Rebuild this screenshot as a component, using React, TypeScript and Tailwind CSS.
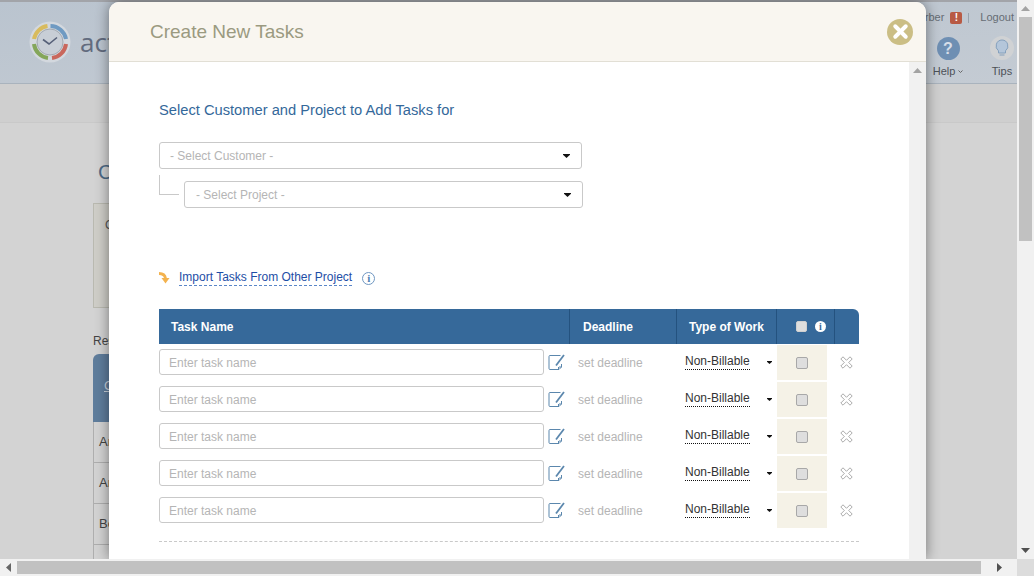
import { X } from "lucide-react";

const rows = [0, 1, 2, 3, 4];

function Caret({ className }: { className: string }) {
  return (
    <svg className={className} width="7" height="4" viewBox="0 0 7 4">
      <path d="M0 0h7v.8L3.500 4 0 .8z" fill="#111" />
    </svg>
  );
}

function EditIcon() {
  return (
    <svg width="18" height="18" viewBox="0 0 18 18" fill="none" className="shrink-0">
      <path d="M12.500 2.500H2a1 1 0 0 0-1 1v12a1 1 0 0 0 1 1h9l2.500-2.500V11" stroke="#5b87ad" strokeWidth="1" />
      <path d="M10.500 14v2.500M11 14h2.500" stroke="#5b87ad" strokeWidth="1" />
      <path d="M8 12.500 16 2" stroke="#5b87ad" strokeWidth="1.800" />
    </svg>
  );
}

function CrossIcon() {
  return (
    <svg width="13" height="13" viewBox="0 0 13 13" fill="none">
      <path
        d="M3 .8 6.500 4.300 10 .8 12.200 3 8.700 6.500 12.200 10 10 12.200 6.500 8.700 3 12.200.8 10 4.300 6.500.8 3z"
        stroke="#a0a0a0"
        strokeWidth="0.9"
      />
    </svg>
  );
}

function Checkbox({ className = "" }: { className?: string }) {
  return <span className={`block w-[12px] h-[12px] rounded-[2px] border border-[#a8a8a8] bg-[#dedede] ${className}`} />;
}

function ScrollUp() {
  return (
    <svg width="9" height="5" viewBox="0 0 9 5">
      <path d="M0 5h9L4.500 0z" fill="#a3a3a3" />
    </svg>
  );
}

function Backdrop() {
  return (
    <div className="absolute inset-0 bg-[#d3d3d3] text-[#444]">
      <div className="h-[84px] border-t-2 border-t-[#a2a4a9] border-b border-b-[#a9b3bd] bg-gradient-to-br from-[#bac4cf] to-[#c4cbd3] flex">
        <div className="flex items-start pl-[29px] pt-[19px] gap-[9px]">
          <svg width="42" height="42" viewBox="0 0 42 42" fill="none">
            <circle cx="21" cy="21" r="20.500" fill="#d3d8de" />
            <path d="M21.500 5A16 16 0 0 1 37 18" stroke="#6f9ac2" strokeWidth="4" />
            <path d="M37 23A16 16 0 0 1 23 37" stroke="#c9675c" strokeWidth="4" />
            <path d="M19 37A16 16 0 0 1 5 23" stroke="#84a65a" strokeWidth="4" />
            <path d="M5 18A16 16 0 0 1 18.500 5" stroke="#d8bb5e" strokeWidth="4" />
            <circle cx="21" cy="21" r="13" fill="#c8ced6" stroke="#a3a9b1" />
            <path d="M14 18.500 20 23 28 16.500" stroke="#566078" strokeWidth="1.600" />
          </svg>
          <span className="text-[26px] leading-[42px] text-[#626b7e] font-['Open_Sans',sans-serif]">activ</span>
        </div>
        <div className="ml-auto flex flex-col items-end">
          <div className="flex items-center h-[17px] mt-[7px] text-[11px] leading-none text-[#666c74]">
            <span>rber</span>
            <span className="ml-[6px] w-[12px] h-[12px] rounded-[2px] bg-[#b85a44] text-white text-[10px] font-bold flex items-center justify-center">
              !
            </span>
            <span className="ml-[6px] w-px h-[10px] bg-[#98a2ad]" />
            <span className="ml-[11px] mr-[3px]">Logout</span>
          </div>
          <div className="flex mt-[11px] text-[11px] leading-none text-[#4d5158]">
            <div className="w-[40px] flex flex-col items-center">
              <span className="w-[23px] h-[23px] rounded-full bg-[#6e8fb3] text-[#d6dee8] text-[16px] font-bold flex items-center justify-center">
                ?
              </span>
              <span className="mt-[6px] flex items-center gap-[3px]">
                Help
                <svg width="5" height="3" viewBox="0 0 5 3" fill="none">
                  <path d="M.5.500 2.500 2.500 4.500.5" stroke="#666" />
                </svg>
              </span>
            </div>
            <div className="ml-[19px] w-[30px] flex flex-col items-center">
              <span className="w-[24px] h-[24px] -mt-[1px] rounded-full bg-[#d0d2d4] flex items-center justify-center">
                <svg width="14" height="18" viewBox="0 0 14 18" fill="#b4c6da" stroke="#84a0bd">
                  <path d="M7 1a6 6 0 0 1 3.500 10.800V14h-7v-2.200A6 6 0 0 1 7 1z" />
                  <path d="M4.500 16h5" />
                </svg>
              </span>
              <span className="mt-[6px]">Tips</span>
            </div>
          </div>
        </div>
      </div>
      <div className="h-[39px] border-b border-[#c9c9c9] bg-[#cfcfcf]" />
      <div className="pl-[93px]">
        <div className="mt-[36px] pl-[5px] text-[21px] leading-[26px] text-[#4e6b87]">C</div>
        <div className="mt-[18px] w-[60px] h-[105px] border border-[#b9b9b0] bg-[#cfcec8] pl-[11px] pt-[12px] text-[12px] text-[#555]">
          C
        </div>
        <div className="mt-[26px] text-[12px] leading-[14px]">Res</div>
        <div className="mt-[6px] w-[60px] h-[68px] rounded-tl-[6px] bg-[#5f7d9c] pl-[11px] pt-[22px] text-[13px] text-[#c9d2dc] underline">
          C
        </div>
        {["An", "An", "Bo", ""].map((t, i) => (
          <div
            key={i}
            className="w-[60px] h-[41px] border-l border-b border-[#aeaeae] pl-[5px] text-[13px] leading-[40px] text-[#444]"
          >
            {t}
          </div>
        ))}
      </div>
    </div>
  );
}

function TaskModal() {
  return (
    <div className="absolute left-[109px] top-[2px] bottom-0 w-[817px] rounded-t-[10px] bg-white shadow-[0_0_14px_rgba(0,0,0,0.45)] flex flex-col">
      <div className="h-[60px] shrink-0 rounded-t-[10px] bg-[#f9f6f0] border-b border-[#e2dfd5] flex items-center justify-between pl-[41px] pr-[13px]">
        <h1 className="mt-[2px] text-[19px] text-[#9b9a80]">Create New Tasks</h1>
        <span className="w-[26px] h-[26px] rounded-full bg-[#cbbe85] flex items-center justify-center">
          <X size={21} strokeWidth={4.5} color="#fff" />
        </span>
      </div>
      <div className="flex-1 min-h-0 flex">
        <div className="w-[800px] pl-[50px] pt-[39px]">
          <h2 className="text-[14.7px] leading-[18px] text-[#34689a]">Select Customer and Project to Add Tasks for</h2>
          <div className="mt-[23px] w-[423px] h-[27px] rounded-[3px] border border-[#c9c9c9] flex items-center justify-between pl-[10px] pr-[11px] text-[12px] text-[#b5b5b5]">
            - Select Customer -
            <Caret className="" />
          </div>
          <div className="mt-[12px] flex items-start">
            <div className="w-[20px] h-[20px] -mt-[6px] border-l border-b border-[#c9c9c9] shrink-0" />
            <div className="ml-[5px] w-[399px] h-[27px] rounded-[3px] border border-[#c9c9c9] flex items-center justify-between pl-[11px] pr-[11px] text-[12px] text-[#b5b5b5]">
              - Select Project -
              <Caret className="" />
            </div>
          </div>
          <div className="mt-[61px] h-[18px] flex items-center text-[12px] text-[#1e4ea6]">
            <svg width="12" height="12" viewBox="0 0 12 12" fill="none">
              <path d="M0 1.500c3.500 0 6 1 6.500 5" stroke="#f3b24e" strokeWidth="2.800" />
              <path d="M2.500 6h8L6.500 11.500z" fill="#f3b24e" />
            </svg>
            <span className="ml-[8px] leading-[15px] border-b border-dashed border-[#5a86c8]">
              Import Tasks From Other Project
            </span>
            <span className="ml-[10px] w-[13px] h-[13px] rounded-full border border-[#6f97c2] flex items-center justify-center text-[11px] font-bold font-['Liberation_Serif',serif] leading-none text-[#4f7fb5]">
              i
            </span>
          </div>
          <div className="mt-[22px] w-[700px] h-[35px] rounded-tr-[6px] bg-[#36699a] flex text-[12px] font-bold text-white leading-[36px]">
            <div className="w-[411px] pl-[12px] border-r border-[#24527f]">Task Name</div>
            <div className="w-[107px] pl-[13px] border-r border-[#24527f]">Deadline</div>
            <div className="w-[100px] pl-[12px] border-r border-[#24527f]">Type of Work</div>
            <div className="w-[58px] border-r border-[#24527f] flex items-center pl-[19px] gap-[8px]">
              <Checkbox className="!w-[11px] !h-[11px] !border-[#d0d0d0]" />
              <span className="w-[11px] h-[11px] rounded-full bg-white text-[#36699a] text-[10px] font-['Liberation_Serif',serif] leading-[11px] text-center">
                i
              </span>
            </div>
          </div>
          <div className="w-[700px] mt-px">
            {rows.map((r) => (
              <div key={r} className="h-[37px] flex text-[12px]">
                <div className="w-[385px] h-[26px] mt-[4px] rounded-[3px] border border-[#c9c9c9] pl-[9px] leading-[26px] text-[#b5b5b5]">
                  Enter task name
                </div>
                <div className="ml-[4px] mt-[8px] h-[18px]">
                  <EditIcon />
                </div>
                <div className="ml-[12px] w-[107px] leading-[36px] text-[#b5b5b5]">set deadline</div>
                <div className="w-[92px] flex items-start">
                  <span className="mt-[9px] leading-[15px] text-[#333] border-b border-dotted border-[#111]">
                    Non-Billable
                  </span>
                  <Caret className="ml-[17px] mt-[16px] !w-[5px] !h-[3px]" />
                </div>
                <div className="w-[50px] h-[35px] bg-[#f5f2e7] flex items-center justify-center">
                  <Checkbox />
                </div>
                <div className="ml-[13px] mt-[11px]">
                  <CrossIcon />
                </div>
              </div>
            ))}
          </div>
          <div className="mt-[11px] w-[700px] border-t border-dashed border-[#c9c9c9]" />
        </div>
        <div className="w-[17px] bg-[#f1f1f1] flex justify-center pt-[6px]">
          <ScrollUp />
        </div>
      </div>
    </div>
  );
}

export default function App() {
  return (
    <div className="w-[1034px] h-[576px] overflow-hidden flex flex-col font-['Liberation_Sans',Arial,sans-serif]">
      <div className="flex-1 min-h-0 flex">
        <div className="flex-1 relative overflow-hidden">
          <Backdrop />
          <TaskModal />
        </div>
        <div className="w-[17px] bg-[#f1f1f1] flex flex-col items-center">
          <div className="h-[17px] flex items-center justify-center">
            <ScrollUp />
          </div>
          <div className="w-[13px] h-[224px] bg-[#c1c1c1]" />
          <div className="mt-auto h-[17px] flex items-center justify-center rotate-180">
            <svg width="9" height="5" viewBox="0 0 9 5">
              <path d="M0 5h9L4.500 0z" fill="#505050" />
            </svg>
          </div>
        </div>
      </div>
      <div className="h-[17px] bg-[#f1f1f1] flex items-center">
        <div className="w-[17px] flex justify-center">
          <svg width="5" height="9" viewBox="0 0 5 9">
            <path d="M5 0v9L0 4.500z" fill="#666" />
          </svg>
        </div>
        <div className="w-[964px] h-[13px] bg-[#c1c1c1]" />
        <div className="flex-1 flex justify-center">
          <svg width="5" height="9" viewBox="0 0 5 9">
            <path d="M0 0v9L5 4.500z" fill="#505050" />
          </svg>
        </div>
        <div className="w-[17px] h-[17px] bg-[#dcdcdc]" />
      </div>
    </div>
  );
}
